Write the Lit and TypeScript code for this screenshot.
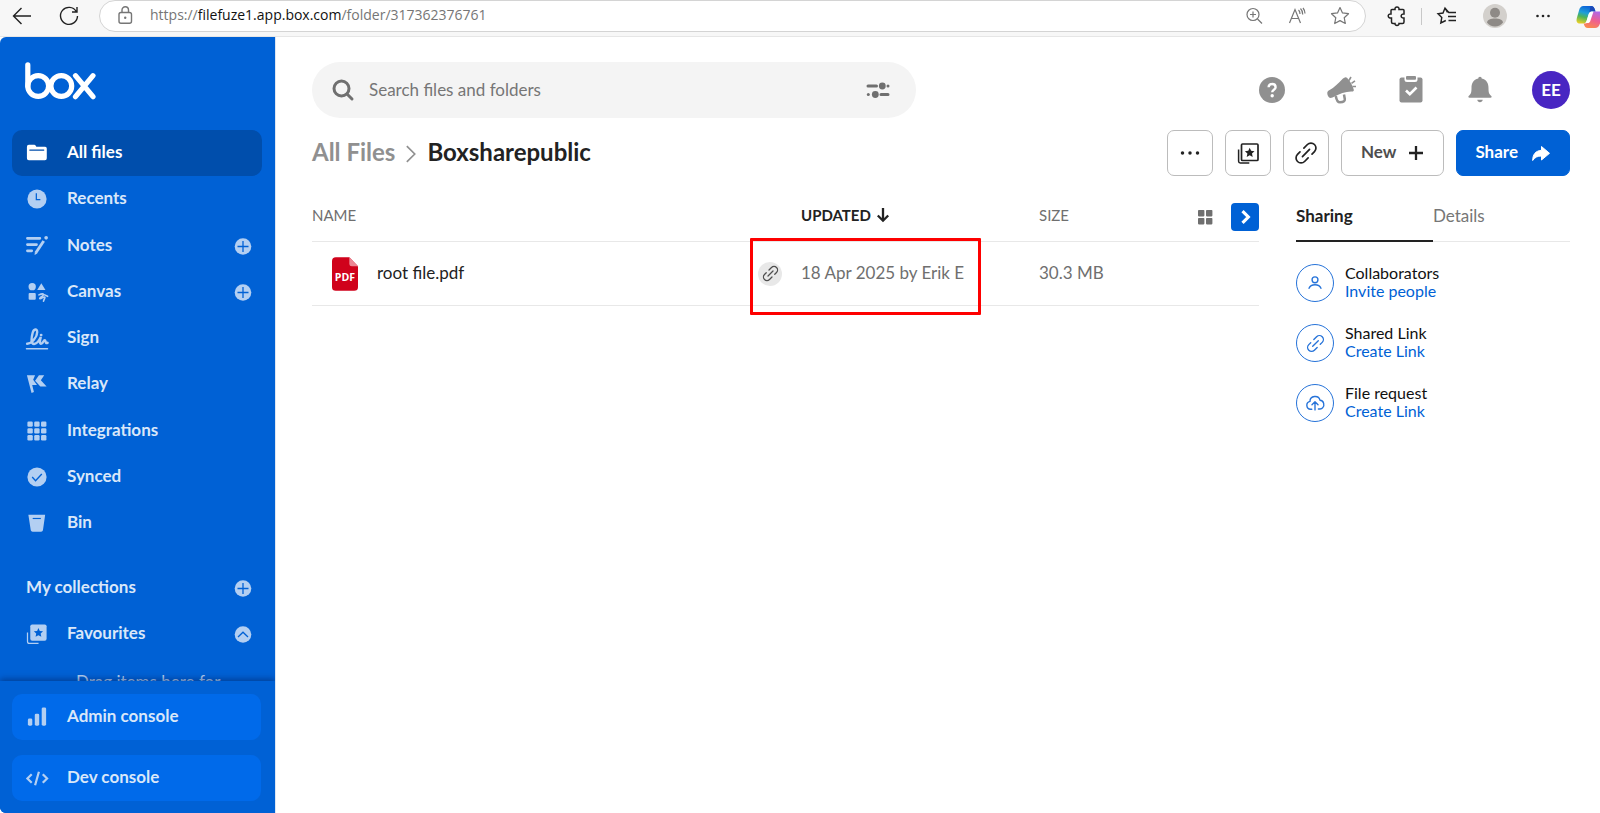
import { LitElement, html, svg, css, nothing } from "lit";
import type { TemplateResult } from "lit";
import { customElement, property } from "lit/decorators.js";
import { classMap } from "lit/directives/class-map.js";

const chain = svg`
  <g transform="rotate(-45 12 12)" fill="none" stroke="currentColor" stroke-linecap="round">
    <path d="M14 7h5a5 5 0 0 1 0 10h-3.500"/>
    <path d="M10 17H5a5 5 0 0 1 0-10h3.500"/>
    <path d="M7 12h10"/>
  </g>`;

const star = "m0-4.800 1.400 3.100 3.400.400-2.500 2.300.700 3.400-3-1.700-3 1.700.700-3.400-2.500-2.300 3.400-.400z";

const ICONS: Record<string, TemplateResult> = {
  folder: svg`<path fill="currentColor" d="M2 6a2 2 0 0 1 2-2h5.500a2 2 0 0 1 1.700.900l.600 1.100H21a1.700 1.700 0 0 1 1.700 1.700V18a2 2 0 0 1-2 2H4a2 2 0 0 1-2-2z"/><path stroke="#004eac" stroke-width="1.300" stroke-linecap="round" d="M5 9.500h14.500"/>`,
  clock: svg`<circle cx="12.500" cy="12.500" r="10" fill="currentColor"/><path d="M11.800 6.500v6.700h4.200" fill="none" stroke="#0061d5" stroke-width="1.300"/>`,
  notes: svg`<path d="M2.500 4.500h13M2.500 11h9.500M2.500 17.500h4.500" stroke="currentColor" stroke-width="2.800" stroke-linecap="round"/><path d="M11.300 19.500 19.500 7.300" stroke="currentColor" stroke-width="3"/><path d="m10 21.800.300-3.300 2.500 1.700z" fill="currentColor"/><circle cx="22" cy="4" r="1.900" fill="currentColor"/>`,
  canvas: svg`<g fill="currentColor"><circle cx="7.500" cy="7" r="3.800"/><path d="M17 3.300 21.300 10.500h-8.600z"/><rect x="3.800" y="13.500" width="7.400" height="7" rx="1"/></g><path d="M14.500 15.500c3-1.500 5.500-1.500 4.500.200s-4.500 3-3.500 3.800 3.500-2.300 4.800-1.800-.500 2-1 4.300M20.500 15.500l3 1.500" fill="none" stroke="currentColor" stroke-width="1.700" stroke-linecap="round"/>`,
  sign: svg`<g fill="none" stroke="currentColor" stroke-linecap="round"><path stroke-width="2.500" d="M2.200 18.500C7 18.500 12.700 11.500 12.700 6.500 12.700 2.300 9 3 8 7 6.500 12.500 6 18.700 9.500 18.700c3 0 5-3 7-7.200-1 3.500-1.500 7 .300 7 2.200 0 2.200-3.700 3.700-3.700s.300 4 3 2.700"/><path stroke-width="1.400" d="M1.500 23.700h22"/></g><circle cx="16.800" cy="9.500" r="1.500" fill="currentColor"/>`,
  relay: svg`<g fill="currentColor"><path d="M2 3.500h8.500L8.500 8l4 5.500H7.500l1.800 7.300-2.500 1z"/><path d="M14.500 3.500h5.500l-3.500 5 6 6.500h-6.500L10.500 9z"/></g>`,
  apps: svg`<g fill="currentColor">${[2.5, 9.6, 16.7].map((y) => [2.5, 9.6, 16.7].map((x) => svg`<rect x=${x} y=${y} width="5.600" height="5.600" rx="1.300"/>`))}</g>`,
  check: svg`<circle cx="12.500" cy="12.500" r="10" fill="currentColor"/><path d="m7.500 12.500 3.500 3.800 6.500-7" fill="none" stroke="#0061d5" stroke-width="1.400"/>`,
  bin: svg`<path d="M3.500 4h17.500l-2.300 16a2 2 0 0 1-2 1.500H8a2 2 0 0 1-2-1.500z" fill="currentColor"/><path d="M8 7.800h8.500" stroke="#0061d5" stroke-width="1.200"/>`,
  collection: svg`<rect x="5.500" y="2.500" width="17" height="17" rx="2" fill="currentColor"/><path d="M2.600 11v9.300a2 2 0 0 0 2 2h9.500" fill="none" stroke="currentColor" stroke-width="1.300"/><path transform="translate(14 11)" d=${star} fill="#0061d5"/>`,
  bars: svg`<g fill="currentColor"><rect x="3" y="14" width="4.600" height="7.500" rx="1.500"/><rect x="10.200" y="9" width="4.600" height="12.500" rx="1.500"/><rect x="17.400" y="2.500" width="4.600" height="19" rx="1.500"/></g>`,
  code: svg`<path d="M7 8.500 2.500 13 7 17.500M18.500 8.500 23 13l-4.500 4.500M14.500 6l-4 14" fill="none" stroke="currentColor" stroke-width="2.300"/>`,
  plusDot: svg`<circle cx="12" cy="12.500" r="8.300" fill="currentColor"/><path d="M12 7v11M6.500 12.500h11" stroke="#0061d5" stroke-width="1.300"/>`,
  upDot: svg`<circle cx="12" cy="12.500" r="8.300" fill="currentColor"/><path d="m7 15 5-4.800 5 4.800" fill="none" stroke="#0061d5" stroke-width="1.300"/>`,
  search: svg`<g fill="none" stroke="currentColor" stroke-width="3"><circle cx="10.500" cy="10.500" r="7.500"/><path d="m16 16 5 5" stroke-linecap="round"/></g>`,
  filter: svg`<path d="M2 8h8.500M15 16.500h7" stroke="currentColor" stroke-width="3" stroke-linecap="round"/><g fill="currentColor"><circle cx="16.300" cy="8" r="3.400"/><circle cx="22" cy="8" r="1.500"/><circle cx="9.300" cy="16.500" r="3.400"/><circle cx="2.300" cy="16.500" r="1.500"/></g>`,
  help: svg`<circle cx="14" cy="14" r="13" fill="currentColor"/><path d="M10.600 11.200c0-4.300 7-4.300 7 0 0 2.500-3.400 2.500-3.400 5" fill="none" stroke="#fff" stroke-width="2.400"/><circle cx="14.200" cy="19.700" r="1.700" fill="#fff"/>`,
  horn: svg`<path d="M15 3.500C17 1.500 18.500.500 20 1.700c3.300 3.500 5.600 7.600 6.800 12 .200 1.300-.500 2-1.700 1.900C19.500 15.300 13 17.500 5.500 21.500 3.300 22.500 2 22 1 20c-1.200-2.500-1-4.500 1.200-5.700C7.500 11.500 11 7.500 15 3.500z" fill="currentColor"/><path d="M8.800 20c.700 4.500 1.500 6.300 4.200 6.300 4 0 5-1.500 4.800-3.300l-.800-4.500" fill="none" stroke="currentColor" stroke-width="2.500"/><path d="M22 4.500 24 1M24.500 7.300l3.500-2.500M25.500 10.500h3.500" stroke="currentColor" stroke-width="1.600"/>`,
  task: svg`<rect x="2.500" y="1.500" width="23" height="25" rx="2" fill="currentColor"/><path d="M7.500 0v3.500a2.500 2.500 0 0 0 2.500 2.500h8a2.500 2.500 0 0 0 2.500-2.500V0" fill="#fff"/><rect x="9" y="0" width="10" height="3.700" rx="1" fill="currentColor"/><path d="m9 14.500 3.800 3.700 6.700-6.700" fill="none" stroke="#fff" stroke-width="2.600"/>`,
  bell: svg`<path d="M14 .800c1 0 1.700.700 1.700 1.700 5 1.200 6.800 5 6.800 9.500 0 4.500.500 6 2.800 8 .700.700.300 1.800-.800 1.800h-21c-1.100 0-1.500-1.100-.800-1.800 2.300-2 2.800-3.500 2.800-8 0-4.500 1.800-8.300 6.800-9.500 0-1 .700-1.700 1.700-1.700z" fill="currentColor"/><path d="M11.300 23.800h5.400c0 3.300-5.400 3.300-5.400 0z" fill="currentColor"/>`,
  dots: svg`<g fill="currentColor"><circle cx="3" cy="12" r="2.100"/><circle cx="12" cy="12" r="2.100"/><circle cx="21" cy="12" r="2.100"/></g>`,
  collectionLine: svg`<rect x="5.500" y="3" width="16.500" height="16.500" rx="1" fill="none" stroke="currentColor" stroke-width="1.700"/><path d="M2.600 8.500v11.700a1.700 1.700 0 0 0 1.700 1.700h9" fill="none" stroke="currentColor" stroke-width="1.500"/><path transform="translate(13.700 11.500)" d=${star} fill="currentColor"/>`,
  chain,
  plus: svg`<path d="M12 5v14M5 12h14" stroke="currentColor" stroke-width="2.300"/>`,
  share: svg`<path d="M12.500 5.500v3.800C6.500 9.800 3.700 13.500 3.700 19.500c2.300-3.300 4.800-4.500 8.800-4.500v4l8-6.700z" fill="currentColor" stroke="currentColor" stroke-width="1" stroke-linejoin="round"/>`,
  arrowDown: svg`<path d="M12 5v12.500M6.800 12.500 12 17.700l5.200-5.200" fill="none" stroke="currentColor" stroke-width="2.300"/>`,
  tiles: svg`<g fill="currentColor"><rect x="5" y="5" width="6.400" height="6.400" rx=".800"/><rect x="13" y="5" width="6.400" height="6.400" rx=".800"/><rect x="5" y="13" width="6.400" height="6.400" rx=".800"/><rect x="13" y="13" width="6.400" height="6.400" rx=".800"/></g>`,
  chevron: svg`<path d="m9 5 7 7-7 7" fill="none" stroke="currentColor" stroke-width="3.800"/>`,
  chevronThin: svg`<path d="m7 2.500 9.500 9.500L7 21.500" fill="none" stroke="currentColor" stroke-width="2"/>`,
  person: svg`<g fill="none" stroke="currentColor" stroke-width="1.500" stroke-linecap="round"><circle cx="12" cy="8.500" r="3.200"/><path d="M5.500 17.800c2-5.200 11-5.200 13 0"/></g>`,
  cloud: svg`<g fill="none" stroke="currentColor" stroke-width="1.500" stroke-linecap="round" stroke-linejoin="round"><path d="M8.500 18.800H7.200a4.300 4.300 0 0 1-.700-8.500c0-6.500 9.500-7.300 11-1.300 4.500.300 5 6 3 8-.700 1-1.800 1.500-3 1.500h-1.800"/><path d="M12 19.500V11M8.700 13.800 12 10.600l3.300 3.200"/></g>`,
  back: svg`<path d="M21 12H4M11.500 4 3.500 12l8 8" fill="none" stroke="currentColor" stroke-width="1.400"/>`,
  reload: svg`<path d="M19.300 7.500A8.500 8.500 0 1 0 20.500 12M20 3v5h-5" fill="none" stroke="currentColor" stroke-width="1.400"/>`,
  lock: svg`<g fill="none" stroke="currentColor" stroke-width="1.400"><rect x="6" y="8.500" width="12.500" height="10.700" rx="2"/><path d="M9 8.500V6a3.200 3.200 0 0 1 6.500 0v2.500"/></g><circle cx="12.200" cy="13.800" r="1.200" fill="currentColor"/>`,
  zoomIn: svg`<g fill="none" stroke="currentColor" stroke-width="1.200"><circle cx="11" cy="10.500" r="6"/><path d="m15.500 15 4.500 4.500M11 7.500v6M8 10.500h6"/></g>`,
  readAloud: svg`<g fill="none" stroke="currentColor" stroke-width="1.200"><path d="M4.500 19 10 5.500 15.500 19M6.500 14.500h7"/><path d="M13.500 6c1.200 1 1.500 2.500 1.500 4M15.500 4.500c1.500 1.500 2.200 3.500 2.200 6M18 4c1.500 1.800 2 3.500 2 5.500"/></g>`,
  starLine: svg`<path d="m12 3.500 2.500 5.400 6 .800-4.300 4 1.100 5.800-5.300-2.900-5.300 2.900 1.100-5.800-4.300-4 6-.800z" fill="none" stroke="currentColor" stroke-width="1.200" stroke-linejoin="round"/>`,
  puzzle: svg`<path d="M7 5.500h3c-.500-3.500 4.500-3.500 4 0h4a1 1 0 0 1 1 1V10c-3.800-.500-3.800 4.500 0 4v4a1.500 1.500 0 0 1-1.500 1.500H14c.500 2.500-4.500 2.500-4 0H8A1.500 1.500 0 0 1 6.500 18v-4c-4.300.500-4.300-4.500-.500-4V6.500a1 1 0 0 1 1-1z" fill="none" stroke="currentColor" stroke-width="1.500"/>`,
  favList: svg`<path d="M14 8.800 10 4 8 9l-5 .700 3.800 3.800-1 5.500 5-2.500M13.500 8.500H21M13 12.500h8M13.500 16.500H21M10 4l2.500 4.500" fill="none" stroke="currentColor" stroke-width="1.400"/>`,
  user: svg`<circle cx="12" cy="12" r="12" fill="#d3d0cc"/><circle cx="12" cy="8.800" r="5" fill="#8e8a86"/><path d="M4 18.500c0-5.500 16-5.500 16 0A10.500 10.500 0 0 1 12 22.500a10.500 10.500 0 0 1-8-4z" fill="#8e8a86"/>`,
  more: svg`<g fill="currentColor"><circle cx="6.500" cy="12" r="1.300"/><circle cx="12" cy="12" r="1.300"/><circle cx="17.500" cy="12" r="1.300"/></g>`,
  copilot: svg`
    <defs>
      <linearGradient id="cool" x1=".600" y1="0" x2=".300" y2="1"><stop offset="0" stop-color="#0a5fd8"/><stop offset=".400" stop-color="#1f9fd8"/><stop offset=".650" stop-color="#4fb458"/><stop offset="1" stop-color="#e3cf28"/></linearGradient>
      <linearGradient id="warm" x1=".700" y1="0" x2=".300" y2="1"><stop offset="0" stop-color="#b068e8"/><stop offset=".500" stop-color="#ee5f92"/><stop offset="1" stop-color="#fb8a4c"/></linearGradient>
    </defs>
    <g transform="translate(0 2)">
      <path d="M7.500 1h7.500c2.300 0 3.200 1.500 4 4l.500 1.500h-3c-2.500 0-3.500 1.500-4.300 4l-1.500 5C9.900 18 8.500 18.500 6.500 18.500H4c-3.500 0-4-2.500-3-6l2-7C3.800 2.500 5 1 7.500 1z" fill="url(#cool)"/>
      <path d="M14.500 1h.500c2.300 0 3.200 1.500 4 4l.500 1.500h-3c-1.500 0-2.500.500-3.200 1.500z" fill="#1b49b8"/>
      <path d="M20.500 6.500H23c3.500 0 4 2.500 3 6l-2 6c-1 3-2.500 4.500-5 4.500h-7c-2.500 0-3.500-1.500-4.300-4.500H9c2 0 3-1 3.800-3.500l1.700-5c.900-2.500 2-3.500 4-3.500z" fill="url(#warm)"/>
      <path d="M13 8.500c.600-1.500 1.500-2 3-2h1.500l-3.200 9.500c-.600 1.500-1.300 2-2.500 2H10z" fill="#fff"/>
    </g>`,
};

@customElement("ui-icon")
export class UiIcon extends LitElement {
  @property() name = "";
  @property({ type: Number }) size = 24;
  @property({ type: Number }) box = 24;
  @property({ type: Number }) weight = 1;

  static styles = css`
    :host { display: inline-flex; flex: none; }
    svg { display: block; }
  `;

  render() {
    return html`<svg width=${this.size} height=${this.size} viewBox="0 0 ${this.box} ${this.box}" stroke-width=${this.weight} aria-hidden="true">${ICONS[this.name] ?? nothing}</svg>`;
  }
}

@customElement("browser-bar")
export class BrowserBar extends LitElement {
  static styles = css`
    :host {
      display: flex; align-items: center; height: 37px; padding: 0 0 4px 10px; box-sizing: border-box;
      background: #f7f7f7; border-bottom: 1px solid #e6e6e6; color: #222; overflow: hidden;
      font-family: "Open Sans", "Noto Sans", sans-serif;
    }
    button { border: 0; padding: 0; background: none; color: inherit; display: flex; }
    .reload { margin: 0 18px 0 23px; }
    .address {
      flex: 1; display: flex; align-items: center; height: 32px; box-sizing: border-box;
      padding: 0 13px 0 13px; gap: 19px; background: #fff; border: 1px solid #d4d4d4;
      border-radius: 16px; color: #767676; min-width: 0;
    }
    .url { flex: 1; margin-left: -6px; padding-bottom: 2px; color: #767676; font-size: 14px; line-height: 20px; text-decoration: none; white-space: nowrap; overflow: hidden; }
    .host { color: #111; }
    .tools { display: flex; align-items: center; margin-left: 19px; }
    .rule { width: 1px; height: 17px; background: #c8c8c8; margin: 0 13px 0 12px; }
    .gap { margin-left: 24px; }
    .copilot { margin-left: 21px; width: 24px; overflow: hidden; }
  `;

  render() {
    return html`
      <button aria-label="Back"><ui-icon name="back"></ui-icon></button>
      <button class="reload" aria-label="Reload"><ui-icon name="reload"></ui-icon></button>
      <div class="address">
        <button aria-label="Site information"><ui-icon name="lock"></ui-icon></button>
        <a class="url" href="#">https://<span class="host">filefuze1.app.box.com</span>/folder/317362376761</a>
        <button aria-label="Zoom"><ui-icon name="zoomIn"></ui-icon></button>
        <button aria-label="Read aloud"><ui-icon name="readAloud"></ui-icon></button>
        <button aria-label="Add to favourites"><ui-icon name="starLine"></ui-icon></button>
      </div>
      <div class="tools">
        <button aria-label="Extensions"><ui-icon name="puzzle"></ui-icon></button>
        <span class="rule"></span>
        <button aria-label="Favourites"><ui-icon name="favList"></ui-icon></button>
        <button class="gap" aria-label="Profile"><ui-icon name="user"></ui-icon></button>
        <button class="gap" aria-label="Settings"><ui-icon name="more"></ui-icon></button>
        <button class="copilot" aria-label="Copilot"><ui-icon name="copilot" size="27" box="27"></ui-icon></button>
      </div>
    `;
  }
}

interface NavItem { icon: string; label: string; active?: boolean; add?: boolean; }

const NAV: NavItem[] = [
  { icon: "folder", label: "All files", active: true },
  { icon: "clock", label: "Recents" },
  { icon: "notes", label: "Notes", add: true },
  { icon: "canvas", label: "Canvas", add: true },
  { icon: "sign", label: "Sign" },
  { icon: "relay", label: "Relay" },
  { icon: "apps", label: "Integrations" },
  { icon: "check", label: "Synced" },
  { icon: "bin", label: "Bin" },
];

@customElement("side-nav")
export class SideNav extends LitElement {
  static styles = css`
    :host {
      display: flex; flex-direction: column; flex: none; width: 275px; background: #0061d5;
      border-radius: 6px 0 0 6px; overflow: hidden; color: #d9e7f9;
      font-family: Lato, sans-serif; font-size: 17px; line-height: 20px; font-weight: 700;
    }
    .scroll { flex: 1; min-height: 0; overflow: hidden; padding: 25px 13px 0 12px; }
    .logo { display: block; margin: 0 0 30px 13px; }
    ul { list-style: none; margin: 0; padding: 0; }
    .main { display: flex; flex-direction: column; justify-content: space-between; height: 416px; margin-bottom: 19px; }
    .row { display: flex; align-items: center; height: 46px; box-sizing: border-box; padding: 0 7px 0 13px; border-radius: 10px; }
    .row.active { background: #004eac; color: #fff; }
    .row.active ui-icon { color: #fff; }
    .link { display: flex; align-items: center; gap: 18px; flex: 1; color: inherit; text-decoration: none; }
    .link span, .heading h2 { padding-bottom: 2px; }
    .heading { padding-left: 14px; }
    .heading h2 { margin: 0; flex: 1; font: inherit; }
    ui-icon { color: #b3cff2; }
    button { border: 0; padding: 0; background: none; display: flex; }
    .hint { margin: 15px 0 0 64px; font-weight: 400; color: #b3cff2; white-space: nowrap; }
    footer { position: relative; display: grid; gap: 15px; padding: 13px 14px 12px 12px; background: #0061d5; box-shadow: 0 -2px 6px rgba(0, 30, 90, 0.5); }
    footer .row { background: #006aea; }
  `;

  private link(icon: string, label: string) {
    return html`<a class="link" href="#"><ui-icon name=${icon} box="25"></ui-icon><span>${label}</span></a>`;
  }

  render() {
    return html`
      <div class="scroll">
        <svg class="logo" width="72" height="38" viewBox="0 0 72 38" role="img" aria-label="Box" fill="none" stroke="#fff" stroke-width="5.200" stroke-linecap="round">
          <path d="M2.800 2.900v21"/><circle cx="13.200" cy="24" r="10.400"/><circle cx="36.300" cy="24" r="10.400"/>
          <path d="m50.500 13.700 17.500 21M68 13.700l-17.500 21"/>
        </svg>
        <ul class="main">
          ${NAV.map((n) => html`
            <li class=${classMap({ row: true, active: !!n.active })}>
              ${this.link(n.icon, n.label)}
              ${n.add ? html`<button aria-label="Add to ${n.label}"><ui-icon name="plusDot"></ui-icon></button>` : nothing}
            </li>`)}
        </ul>
        <div class="row heading"><h2>My collections</h2><button aria-label="New collection"><ui-icon name="plusDot"></ui-icon></button></div>
        <div class="row">${this.link("collection", "Favourites")}<button aria-label="Collapse"><ui-icon name="upDot"></ui-icon></button></div>
        <p class="hint">Drag items here for</p>
      </div>
      <footer>
        <div class="row">${this.link("bars", "Admin console")}</div>
        <div class="row">${this.link("code", "Dev console")}</div>
      </footer>
    `;
  }
}

@customElement("top-bar")
export class TopBar extends LitElement {
  static styles = css`
    :host { display: flex; align-items: center; justify-content: space-between; color: #909090; }
    form {
      display: flex; align-items: center; width: 48%; height: 56px; box-sizing: border-box;
      padding: 0 26px 0 19px; border-radius: 28px; background: #f4f4f4; color: #6f6f6f;
    }
    input { flex: 1; min-width: 0; margin: 0 14px; padding: 0; border: 0; outline: 0; background: none; font: 17px/22px Lato, sans-serif; color: #222; }
    input::placeholder { color: #767676; opacity: 1; }
    button { border: 0; padding: 0; background: none; color: inherit; display: flex; }
    .actions { display: flex; align-items: center; gap: 41px; }
    .avatar {
      width: 38px; height: 38px; margin-left: -3px; border-radius: 50%; background: #4826c2; color: #fff;
      align-items: center; justify-content: center; font: 700 17px/20px Lato, sans-serif;
    }
  `;

  render() {
    return html`
      <form role="search">
        <ui-icon name="search"></ui-icon>
        <input type="search" aria-label="Search files and folders" placeholder="Search files and folders" />
        <button type="button" aria-label="Filters"><ui-icon name="filter"></ui-icon></button>
      </form>
      <div class="actions">
        <button aria-label="Help"><ui-icon name="help" size="28" box="28"></ui-icon></button>
        <button aria-label="News"><ui-icon name="horn" size="29" box="29"></ui-icon></button>
        <button aria-label="Tasks"><ui-icon name="task" size="28" box="28"></ui-icon></button>
        <button aria-label="Notifications"><ui-icon name="bell" size="28" box="28"></ui-icon></button>
        <button class="avatar" aria-label="Account">EE</button>
      </div>
    `;
  }
}

@customElement("folder-bar")
export class FolderBar extends LitElement {
  static styles = css`
    :host { display: flex; align-items: center; justify-content: space-between; font-family: Lato, sans-serif; }
    nav { display: flex; align-items: center; gap: 6px; padding-bottom: 3px; font-size: 24px; line-height: 30px; font-weight: 700; color: #222; }
    nav a { color: #909090; text-decoration: none; }
    nav ui-icon { color: #909090; padding-top: 5px; }
    h1 { margin: 0; font: inherit; }
    .actions { display: flex; gap: 12px; }
    button {
      display: flex; align-items: center; justify-content: center; height: 46px; min-width: 46px; box-sizing: border-box;
      padding: 0; border: 1px solid #bcbcbc; border-radius: 7px; background: #fff; color: #222;
      font: 700 17px/20px Lato, sans-serif;
    }
    button span { padding-bottom: 2px; }
    .new { gap: 8px; padding: 0 15px 0 19px; }
    .new span { color: #4e4e4e; }
    .share { gap: 11px; padding: 0 16px 0 18px; background: #0061d5; border-color: #0061d5; color: #fff; }
  `;

  render() {
    return html`
      <nav aria-label="Breadcrumb"><a href="#">All Files</a><ui-icon name="chevronThin" size="20"></ui-icon><h1>Boxsharepublic</h1></nav>
      <div class="actions">
        <button aria-label="More options"><ui-icon name="dots" size="20"></ui-icon></button>
        <button aria-label="Add to collection"><ui-icon name="collectionLine"></ui-icon></button>
        <button aria-label="Copy link"><ui-icon name="chain" weight="1.700"></ui-icon></button>
        <button class="new"><span>New</span><ui-icon name="plus"></ui-icon></button>
        <button class="share"><span>Share</span><ui-icon name="share"></ui-icon></button>
      </div>
    `;
  }
}

@customElement("file-list")
export class FileList extends LitElement {
  static styles = css`
    :host { display: block; font-family: Lato, sans-serif; }
    table { width: 100%; table-layout: fixed; border-collapse: separate; border-spacing: 0; font-size: 17px; line-height: 20px; color: #6f6f6f; }
    th, td { padding: 0; border-bottom: 1px solid #e8e8e8; text-align: left; box-sizing: border-box; }
    th { height: 54px; font-size: 15px; font-weight: 400; }
    td { height: 64px; padding-bottom: 2px; }
    .shared { width: 44px; }
    .updated { width: 238px; }
    .size { width: 120px; }
    .tools { width: 100px; }
    .sort { display: flex; align-items: center; border: 0; padding: 0; background: none; color: #222; font: 700 15px/20px Lato, sans-serif; }
    .views { display: flex; align-items: center; justify-content: flex-end; gap: 12px; padding-top: 4px; }
    .views button { display: flex; align-items: center; justify-content: center; width: 28px; height: 28px; padding: 0; border: 0; border-radius: 4px; background: none; color: #6f6f6f; }
    .views .toggle { background: #0061d5; color: #fff; }
    .file { display: flex; align-items: center; gap: 19px; padding-left: 20px; color: #222; text-decoration: none; }
    .pdf { display: block; margin-top: 2px; }
    .label { font: 700 11px "Open Sans", sans-serif; fill: #fff; }
    .badge { display: flex; align-items: center; justify-content: center; width: 24px; height: 24px; margin: 2px 0 0 1px; padding: 0; border: 0; border-radius: 50%; background: #e8e8e8; color: #4e4e4e; }
    .date { position: relative; }
    .mark { position: absolute; left: -51px; top: -4px; width: 231px; height: 77px; box-sizing: border-box; border: 3px solid #fe0000; border-radius: 1px; pointer-events: none; }
  `;

  render() {
    return html`
      <table>
        <thead>
          <tr>
            <th scope="col">NAME</th>
            <th class="shared"></th>
            <th class="updated" scope="col"><button class="sort">UPDATED<ui-icon name="arrowDown"></ui-icon></button></th>
            <th class="size" scope="col">SIZE</th>
            <th class="tools">
              <div class="views">
                <button aria-label="Grid view"><ui-icon name="tiles"></ui-icon></button>
                <button class="toggle" aria-label="Hide sidebar"><ui-icon name="chevron" size="20"></ui-icon></button>
              </div>
            </th>
          </tr>
        </thead>
        <tbody>
          <tr>
            <td>
              <a class="file" href="#">
                <svg class="pdf" width="26" height="34" viewBox="0 0 27 35" aria-hidden="true">
                  <path d="M4 0h14l9 9.500V31a4 4 0 0 1-4 4H4a4 4 0 0 1-4-4V4a4 4 0 0 1 4-4z" fill="#d0021b"/>
                  <path d="M18 0l9 9.500h-6.500A2.500 2.500 0 0 1 18 7z" fill="#ec8794"/>
                  <text class="label" x="13.500" y="24.500" text-anchor="middle">PDF</text>
                </svg>
                <span>root file.pdf</span>
              </a>
            </td>
            <td><button class="badge" aria-label="Shared link"><ui-icon name="chain" size="17" weight="1.800"></ui-icon></button></td>
            <td class="date">18 Apr 2025 by Erik E<span class="mark"></span></td>
            <td>30.3 MB</td>
            <td></td>
          </tr>
        </tbody>
      </table>
    `;
  }
}

const SHARING = [
  { icon: "person", title: "Collaborators", action: "Invite people" },
  { icon: "chain", title: "Shared Link", action: "Create Link" },
  { icon: "cloud", title: "File request", action: "Create Link" },
];

@customElement("share-panel")
export class SharePanel extends LitElement {
  static styles = css`
    :host { display: block; width: 274px; flex: none; font: 16px/18px Lato, sans-serif; color: #111; }
    .tabs { display: grid; grid-template-columns: 1fr 1fr; border-bottom: 1px solid #e8e8e8; }
    .tabs button { height: 54px; margin-bottom: -1px; padding: 4px 0 0; border: 0; border-bottom: 2px solid transparent; background: none; text-align: left; font: 17px/20px Lato, sans-serif; color: #767676; }
    .tabs .on { font-weight: 700; color: #222; border-color: #222; }
    ul { display: grid; gap: 22px; list-style: none; margin: 22px 0 0; padding: 0; }
    li { display: flex; align-items: center; gap: 11px; height: 38px; }
    .ring { display: flex; align-items: center; justify-content: center; width: 38px; height: 38px; box-sizing: border-box; border: 1px solid #2673d9; border-radius: 50%; color: #2673d9; }
    .text { display: grid; padding-bottom: 2px; }
    a { color: #0061d5; text-decoration: none; }
  `;

  render() {
    return html`
      <div class="tabs" role="tablist">
        <button class="on" role="tab" aria-selected="true">Sharing</button>
        <button role="tab" aria-selected="false">Details</button>
      </div>
      <ul>
        ${SHARING.map((s) => html`
          <li>
            <span class="ring"><ui-icon name=${s.icon} size=${s.icon === "chain" ? 19 : 22} weight="1.700"></ui-icon></span>
            <div class="text"><span>${s.title}</span><a href="#">${s.action}</a></div>
          </li>`)}
      </ul>
    `;
  }
}

@customElement("app-root")
export class AppRoot extends LitElement {
  static styles = css`
    :host { display: flex; flex-direction: column; height: 100vh; background: #fff; }
    .shell { flex: 1; min-height: 0; display: flex; background: #fff; }
    main { flex: 1; min-width: 0; padding: 25px 30px 0 36px; border-left: 1px solid #dde6f2; }
    folder-bar { margin-top: 12px; }
    .content { display: flex; align-items: flex-start; gap: 37px; margin-top: 12px; }
    file-list { flex: 1; min-width: 0; }
  `;

  render() {
    return html`
      <browser-bar></browser-bar>
      <div class="shell">
        <side-nav></side-nav>
        <main>
          <top-bar></top-bar>
          <folder-bar></folder-bar>
          <div class="content">
            <file-list></file-list>
            <share-panel></share-panel>
          </div>
        </main>
      </div>
    `;
  }
}
